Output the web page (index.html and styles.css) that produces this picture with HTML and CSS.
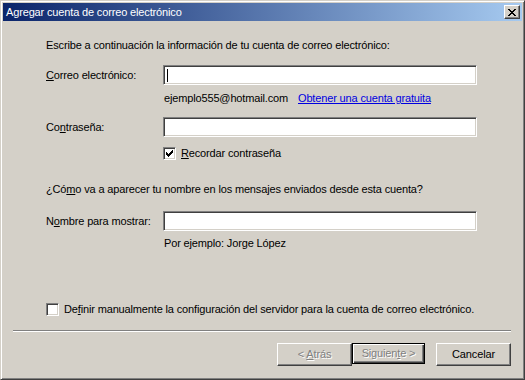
FILE: index.html
```html
<!DOCTYPE html>
<html lang="es">
<head>
    <meta charset="UTF-8">
    <title>Agregar cuenta de correo electrónico</title>
    <link rel="stylesheet" href="styles.css">
</head>
<body>
    <div class="window">
        <div class="titlebar">
            <span class="title">Agregar cuenta de correo electrónico</span>
            <span class="close">
                <svg width="8" height="7" viewBox="0 0 8 7" shape-rendering="crispEdges">
                    <path d="M0 0h2v1h-2zM6 0h2v1h-2zM1 1h2v1h-2zM5 1h2v1h-2zM2 2h4v1h-4zM3 3h2v1h-2zM2 4h4v1h-4zM1 5h2v1h-2zM5 5h2v1h-2zM0 6h2v1h-2zM6 6h2v1h-2z" fill="#000"/>
                </svg>
            </span>
        </div>

        <div class="body">
            <div class="form">
                <p class="intro">Escribe a continuación la información de tu cuenta de correo electrónico:</p>

                <div class="row row-first">
                    <span class="label"><u>C</u>orreo electrónico:</span>
                    <div class="field"><span class="caret"></span></div>
                </div>
                <div class="hint hint-mail">
                    <span class="example">ejemplo555@hotmail.com</span>
                    <a class="link">Obtener una cuenta gratuita</a>
                </div>

                <div class="row row-pass">
                    <span class="label">Co<u>n</u>traseña:</span>
                    <div class="field"></div>
                </div>
                <div class="check check-remember">
                    <span class="box">
                        <svg width="13" height="13" viewBox="0 0 13 13" shape-rendering="crispEdges">
                            <path d="M9 3h1v1h-1zM8 4h2v1h-2zM3 5h1v1h-1zM7 5h3v1h-3zM3 6h2v1h-2zM6 6h3v1h-3zM3 7h5v1h-5zM4 8h3v1h-3zM5 9h1v1h-1z" fill="#000"/>
                        </svg>
                    </span>
                    <span><u>R</u>ecordar contraseña</span>
                </div>

                <p class="question">¿Có<u>m</u>o va a aparecer tu nombre en los mensajes enviados desde esta cuenta?</p>

                <div class="row row-name">
                    <span class="label">N<u>o</u>mbre para mostrar:</span>
                    <div class="field"></div>
                </div>
                <div class="hint hint-name">Por ejemplo: Jorge López</div>
            </div>

            <div class="check check-manual">
                <span class="box"></span>
                <span>De<u>f</u>inir manualmente la configuración del servidor para la cuenta de correo electrónico.</span>
            </div>

            <div class="separator"></div>

            <div class="buttons">
                <span class="btn disabled"><span>&lt; <u>A</u>trás</span></span>
                <span class="btn disabled default"><span>Siguien<u>t</u>e &gt;</span></span>
                <span class="btn cancel"><span>Cancelar</span></span>
            </div>
        </div>
    </div>
</body>
</html>
```

FILE: styles.css
```css
html, body {
    margin: 0;
    padding: 0;
    background: #d4d0c8;
}
body {
    font-family: "Liberation Sans", Arial, sans-serif;
    font-size: 11px;
    line-height: 13px;
    letter-spacing: -0.15px;
    color: #000;
}
.window {
    width: 525px;
    height: 380px;
    box-sizing: border-box;
    background: #d4d0c8;
    border: 1px solid;
    border-color: #d4d0c8 #404040 #404040 #d4d0c8;
    box-shadow: inset 1px 1px #fff, inset -1px -1px #808080;
    padding: 2px;
    display: flex;
    flex-direction: column;
}
.titlebar {
    height: 18px;
    background: linear-gradient(to right, #0a246a, #a6caf0);
    display: flex;
    align-items: center;
    justify-content: space-between;
    padding: 0 2px 0 3px;
}
.title {
    color: #fff;
    font-size: 11px;
}
.close {
    width: 14px;
    height: 12px;
    background: #d4d0c8;
    border: 1px solid;
    border-color: #fff #404040 #404040 #fff;
    box-shadow: inset -1px -1px #808080;
    display: flex;
    align-items: center;
    justify-content: center;
}
.close svg {
    display: block;
}
.body {
    flex: 1;
    display: flex;
    flex-direction: column;
}
.form {
    padding: 18px 0 0 43px;
}
p {
    margin: 0;
}
.row {
    display: flex;
    align-items: center;
}
.label {
    width: 117px;
}
.field {
    width: 312px;
    height: 18px;
    background: #fff;
    border: 1px solid;
    border-color: #808080 #fff #fff #808080;
    box-shadow: inset 1px 1px #404040, inset -1px -1px #d4d0c8;
    display: flex;
    align-items: center;
}
.caret {
    width: 1px;
    height: 13px;
    background: #000;
    margin-left: 3px;
}
.row-first {
    margin-top: 13px;
}
.hint {
    margin-left: 118px;
}
.hint-mail {
    margin-top: 7px;
    display: flex;
}
.example {
    width: 134px;
}
.link {
    color: #0000e0;
    text-decoration: underline;
}
.row-pass {
    margin-top: 12px;
}
.check {
    display: flex;
    align-items: center;
    gap: 5px;
}
.box {
    width: 11px;
    height: 11px;
    background: #fff;
    border: 1px solid;
    border-color: #808080 #fff #fff #808080;
    box-shadow: inset 1px 1px #404040, inset -1px -1px #d4d0c8;
    position: relative;
}
.box svg {
    position: absolute;
    left: -1px;
    top: -1px;
}
.check-remember {
    margin: 10px 0 0 117px;
}
.question {
    margin-top: 23px;
}
.row-name {
    margin-top: 15px;
}
.hint-name {
    margin-top: 6px;
}
.check-manual {
    margin: auto 0 0 43px;
}
.separator {
    margin: 14px 11px 0 10px;
    border-top: 1px solid #808080;
    border-bottom: 1px solid #fff;
}
.buttons {
    display: flex;
    justify-content: flex-end;
    padding: 11px 11px 11px 0;
}
.btn {
    width: 73px;
    height: 21px;
    box-sizing: content-box;
    border: 1px solid;
    border-color: #fff #404040 #404040 #fff;
    box-shadow: inset -1px -1px #808080;
    display: flex;
    align-items: center;
    justify-content: center;
}
.btn.disabled {
    color: #808080;
    text-shadow: 1px 1px 0 #fff;
}
.btn.default {
    width: 71px;
    height: 19px;
    border: 1px solid #000;
    box-shadow: inset 1px 1px #fff, inset -1px -1px #404040, inset -2px -2px #808080;
}
.btn.cancel {
    margin-left: 11px;
}
```
